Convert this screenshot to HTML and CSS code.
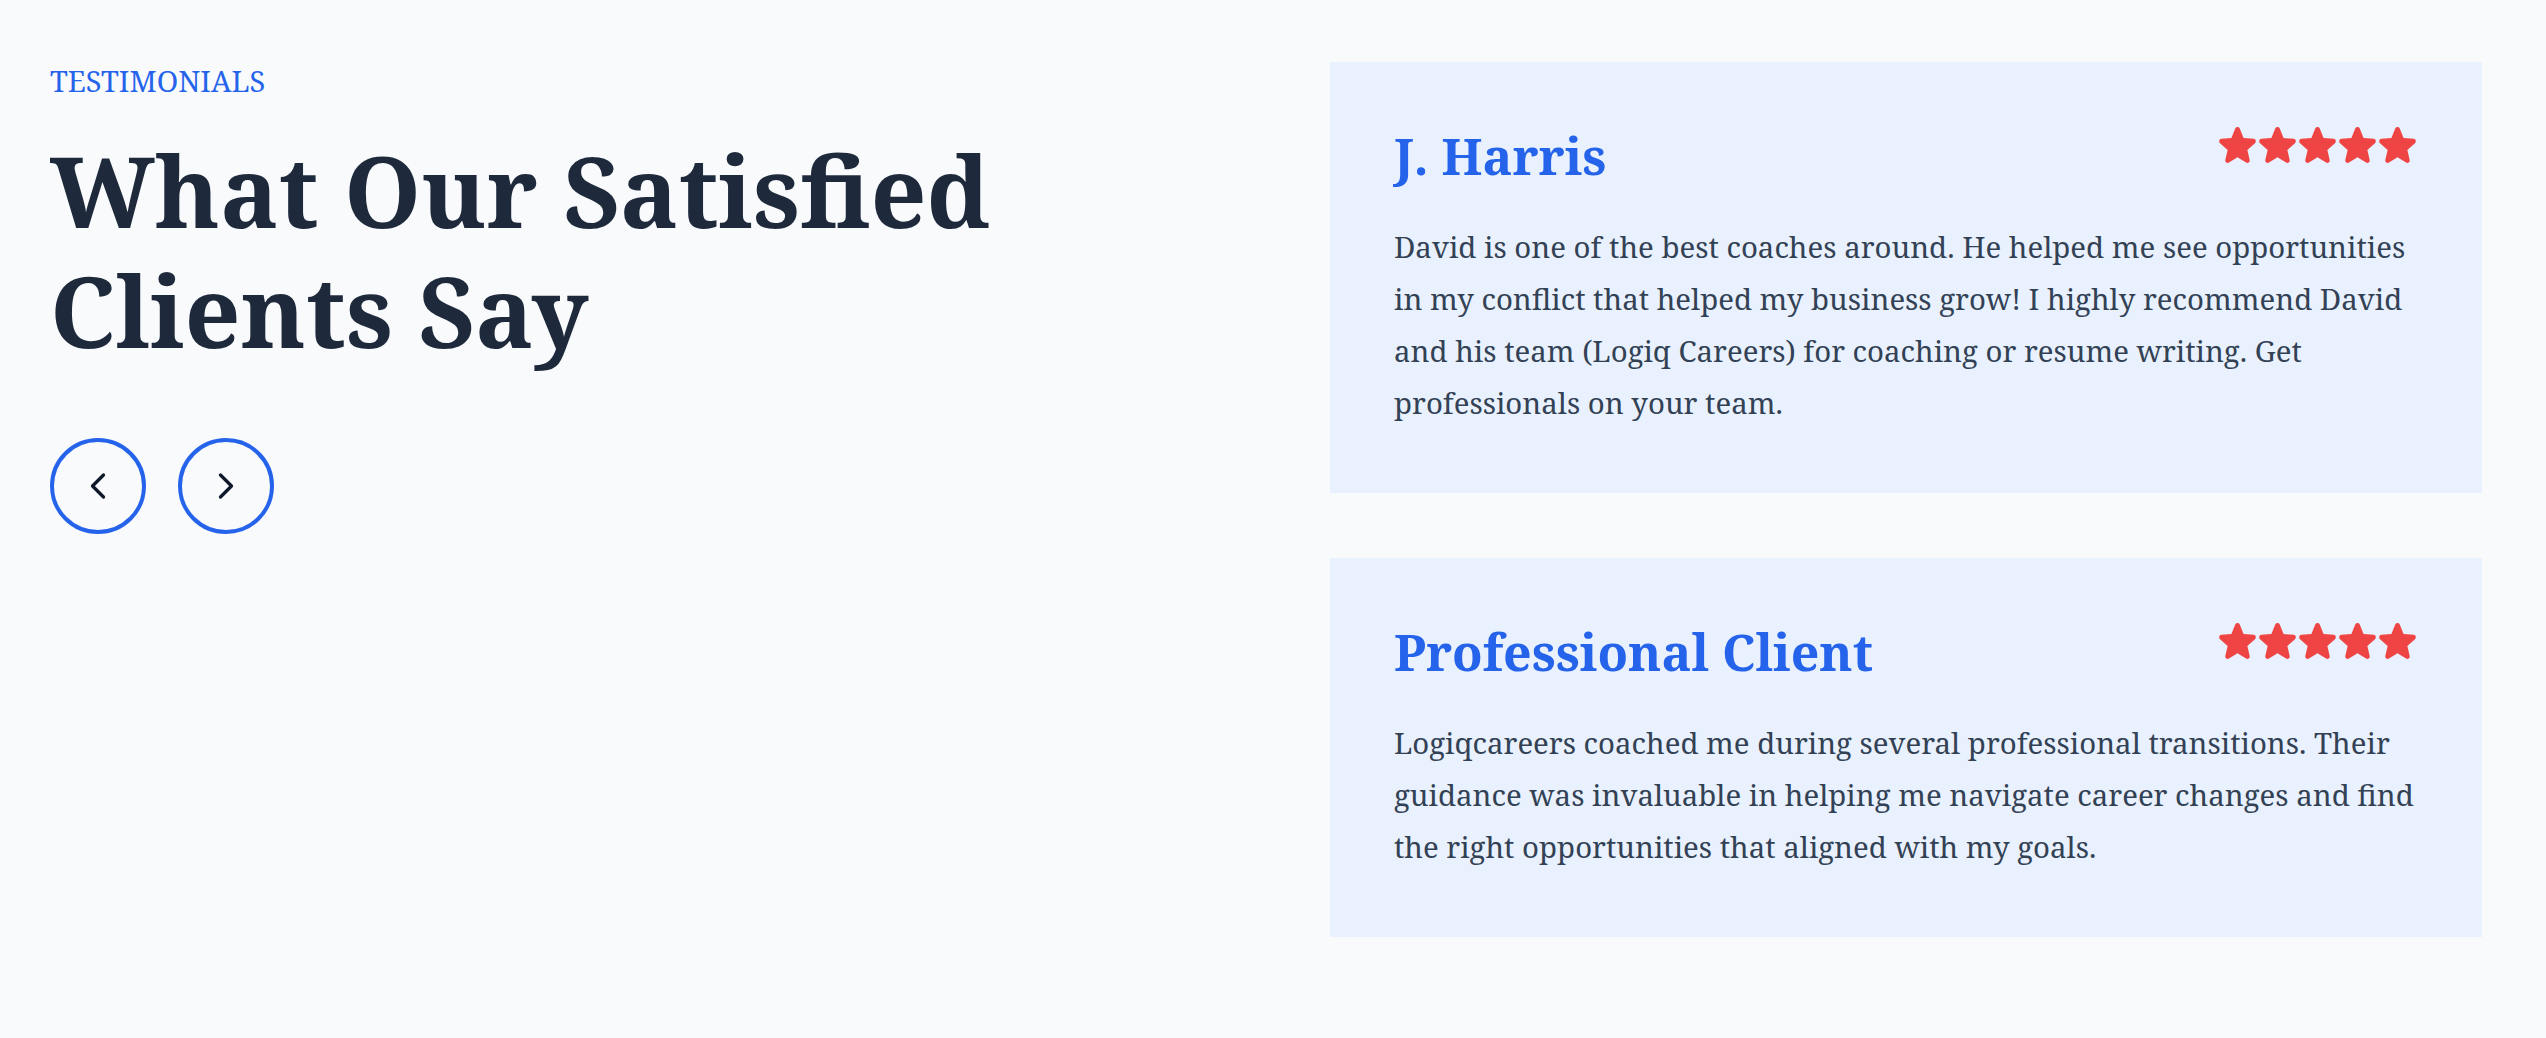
FILE: index.html
```html
<!DOCTYPE html>
<html lang="en">
<head>
<meta charset="utf-8">
<title>Testimonials</title>
<link rel="stylesheet" href="styles.css">
</head>
<body>
<section class="testimonials">
  <div class="intro">
    <p class="eyebrow">TESTIMONIALS</p>
    <h2 class="title">What Our Satisfied Clients Say</h2>
    <div class="nav">
      <button class="nav-btn" aria-label="Previous">
        <svg viewBox="0 0 24 24" class="chev"><path d="m15 18-6-6 6-6"/></svg>
      </button>
      <button class="nav-btn" aria-label="Next">
        <svg viewBox="0 0 24 24" class="chev"><path d="m9 18 6-6-6-6"/></svg>
      </button>
    </div>
  </div>
  <div class="cards">
    <article class="card">
      <div class="card-head">
        <h3 class="name">J. Harris</h3>
        <div class="stars">
          <svg class="star" viewBox="2 2.4 20 19" preserveAspectRatio="none"><path d="M10.788 3.21c.448-1.077 1.976-1.077 2.424 0l2.082 5.006 5.404.434c1.164.093 1.636 1.545.749 2.305l-4.117 3.527 1.257 5.273c.271 1.136-.964 2.033-1.96 1.425L12 18.354 7.373 21.18c-.996.608-2.231-.29-1.96-1.425l1.257-5.273-4.117-3.527c-.887-.76-.415-2.212.749-2.305l5.404-.434 2.082-5.005Z"/></svg>
          <svg class="star" viewBox="2 2.4 20 19" preserveAspectRatio="none"><path d="M10.788 3.21c.448-1.077 1.976-1.077 2.424 0l2.082 5.006 5.404.434c1.164.093 1.636 1.545.749 2.305l-4.117 3.527 1.257 5.273c.271 1.136-.964 2.033-1.960 1.425L12 18.354 7.373 21.18c-.996.608-2.231-.29-1.96-1.425l1.257-5.273-4.117-3.527c-.887-.76-.415-2.212.749-2.305l5.404-.434 2.082-5.005Z"/></svg>
          <svg class="star" viewBox="2 2.4 20 19" preserveAspectRatio="none"><path d="M10.788 3.21c.448-1.077 1.976-1.077 2.424 0l2.082 5.006 5.404.434c1.164.093 1.636 1.545.749 2.305l-4.117 3.527 1.257 5.273c.271 1.136-.964 2.033-1.96 1.425L12 18.354 7.373 21.18c-.996.608-2.231-.29-1.96-1.425l1.257-5.273-4.117-3.527c-.887-.76-.415-2.212.749-2.305l5.404-.434 2.082-5.005Z"/></svg>
          <svg class="star" viewBox="2 2.4 20 19" preserveAspectRatio="none"><path d="M10.788 3.21c.448-1.077 1.976-1.077 2.424 0l2.082 5.006 5.404.434c1.164.093 1.636 1.545.749 2.305l-4.117 3.527 1.257 5.273c.271 1.136-.964 2.033-1.96 1.425L12 18.354 7.373 21.18c-.996.608-2.231-.29-1.96-1.425l1.257-5.273-4.117-3.527c-.887-.76-.415-2.212.749-2.305l5.404-.434 2.082-5.005Z"/></svg>
          <svg class="star" viewBox="2 2.4 20 19" preserveAspectRatio="none"><path d="M10.788 3.21c.448-1.077 1.976-1.077 2.424 0l2.082 5.006 5.404.434c1.164.093 1.636 1.545.749 2.305l-4.117 3.527 1.257 5.273c.271 1.136-.964 2.033-1.96 1.425L12 18.354 7.373 21.18c-.996.608-2.231-.29-1.96-1.425l1.257-5.273-4.117-3.527c-.887-.76-.415-2.212.749-2.305l5.404-.434 2.082-5.005Z"/></svg>
        </div>
      </div>
      <p class="quote">David is one of the best coaches around. He helped me see opportunities in my conflict that helped my business grow! I highly recommend David and his team (Logiq Careers) for coaching or resume writing. Get professionals on your team.</p>
    </article>
    <article class="card">
      <div class="card-head">
        <h3 class="name">Professional Client</h3>
        <div class="stars">
          <svg class="star" viewBox="2 2.4 20 19" preserveAspectRatio="none"><path d="M10.788 3.21c.448-1.077 1.976-1.077 2.424 0l2.082 5.006 5.404.434c1.164.093 1.636 1.545.749 2.305l-4.117 3.527 1.257 5.273c.271 1.136-.964 2.033-1.96 1.425L12 18.354 7.373 21.18c-.996.608-2.231-.29-1.96-1.425l1.257-5.273-4.117-3.527c-.887-.76-.415-2.212.749-2.305l5.404-.434 2.082-5.005Z"/></svg>
          <svg class="star" viewBox="2 2.4 20 19" preserveAspectRatio="none"><path d="M10.788 3.21c.448-1.077 1.976-1.077 2.424 0l2.082 5.006 5.404.434c1.164.093 1.636 1.545.749 2.305l-4.117 3.527 1.257 5.273c.271 1.136-.964 2.033-1.96 1.425L12 18.354 7.373 21.18c-.996.608-2.231-.29-1.96-1.425l1.257-5.273-4.117-3.527c-.887-.76-.415-2.212.749-2.305l5.404-.434 2.082-5.005Z"/></svg>
          <svg class="star" viewBox="2 2.4 20 19" preserveAspectRatio="none"><path d="M10.788 3.21c.448-1.077 1.976-1.077 2.424 0l2.082 5.006 5.404.434c1.164.093 1.636 1.545.749 2.305l-4.117 3.527 1.257 5.273c.271 1.136-.964 2.033-1.96 1.425L12 18.354 7.373 21.18c-.996.608-2.231-.29-1.96-1.425l1.257-5.273-4.117-3.527c-.887-.76-.415-2.212.749-2.305l5.404-.434 2.082-5.005Z"/></svg>
          <svg class="star" viewBox="2 2.4 20 19" preserveAspectRatio="none"><path d="M10.788 3.21c.448-1.077 1.976-1.077 2.424 0l2.082 5.006 5.404.434c1.164.093 1.636 1.545.749 2.305l-4.117 3.527 1.257 5.273c.271 1.136-.964 2.033-1.96 1.425L12 18.354 7.373 21.18c-.996.608-2.231-.29-1.96-1.425l1.257-5.273-4.117-3.527c-.887-.76-.415-2.212.749-2.305l5.404-.434 2.082-5.005Z"/></svg>
          <svg class="star" viewBox="2 2.4 20 19" preserveAspectRatio="none"><path d="M10.788 3.21c.448-1.077 1.976-1.077 2.424 0l2.082 5.006 5.404.434c1.164.093 1.636 1.545.749 2.305l-4.117 3.527 1.257 5.273c.271 1.136-.964 2.033-1.96 1.425L12 18.354 7.373 21.18c-.996.608-2.231-.29-1.96-1.425l1.257-5.273-4.117-3.527c-.887-.76-.415-2.212.749-2.305l5.404-.434 2.082-5.005Z"/></svg>
        </div>
      </div>
      <p class="quote">Logiqcareers coached me during several professional transitions. Their guidance was invaluable in helping me navigate career changes and find the right opportunities that aligned with my goals.</p>
    </article>
  </div>
</section>
</body>
</html>
```
FILE: styles.css
```css
html, body {
  margin: 0;
  padding: 0;
  background: #f8fafc;
}

body {
  font-family: "Noto Serif", "Liberation Serif", serif;
  color: #334155;
}

.testimonials {
  display: grid;
  grid-template-columns: 1152px 1152px;
  column-gap: 128px;
  padding: 62px 64px 100px 50px;
  align-items: start;
}

.intro {
  display: flex;
  flex-direction: column;
  align-items: flex-start;
}

.eyebrow {
  margin: 0;
  font-size: 29px;
  line-height: 38px;
  color: #2563eb;
  font-weight: 400;
}

.title {
  margin: 30px 0 0;
  font-size: 98px;
  line-height: 120px;
  font-weight: 700;
  color: #1e293b;
}

.nav {
  display: flex;
  gap: 32px;
  margin-top: 68px;
}

.nav-btn {
  width: 96px;
  height: 96px;
  box-sizing: border-box;
  border: 4px solid #2563eb;
  border-radius: 50%;
  background: transparent;
  padding: 0;
  display: flex;
  align-items: center;
  justify-content: center;
  cursor: pointer;
}

.chev {
  width: 44px;
  height: 44px;
  fill: none;
  stroke: #0f172a;
  stroke-width: 1.8;
  stroke-linecap: round;
  stroke-linejoin: round;
}

.cards {
  display: flex;
  flex-direction: column;
  gap: 65px;
}

.card {
  background: #e8f1fd;
  padding: 64px;
}

.card-head {
  display: flex;
  justify-content: space-between;
  align-items: flex-start;
}

.name {
  margin: 0;
  font-size: 50px;
  line-height: 60px;
  font-weight: 700;
  color: #2563eb;
}

.stars {
  display: flex;
  gap: 3px;
  margin-top: 1px;
  margin-right: 2px;
}

.star {
  width: 37px;
  height: 36px;
  fill: #ef4444;
}

.quote {
  margin: 35px 0 0;
  font-size: 29.4px;
  line-height: 52px;
  color: #334155;
}
```
